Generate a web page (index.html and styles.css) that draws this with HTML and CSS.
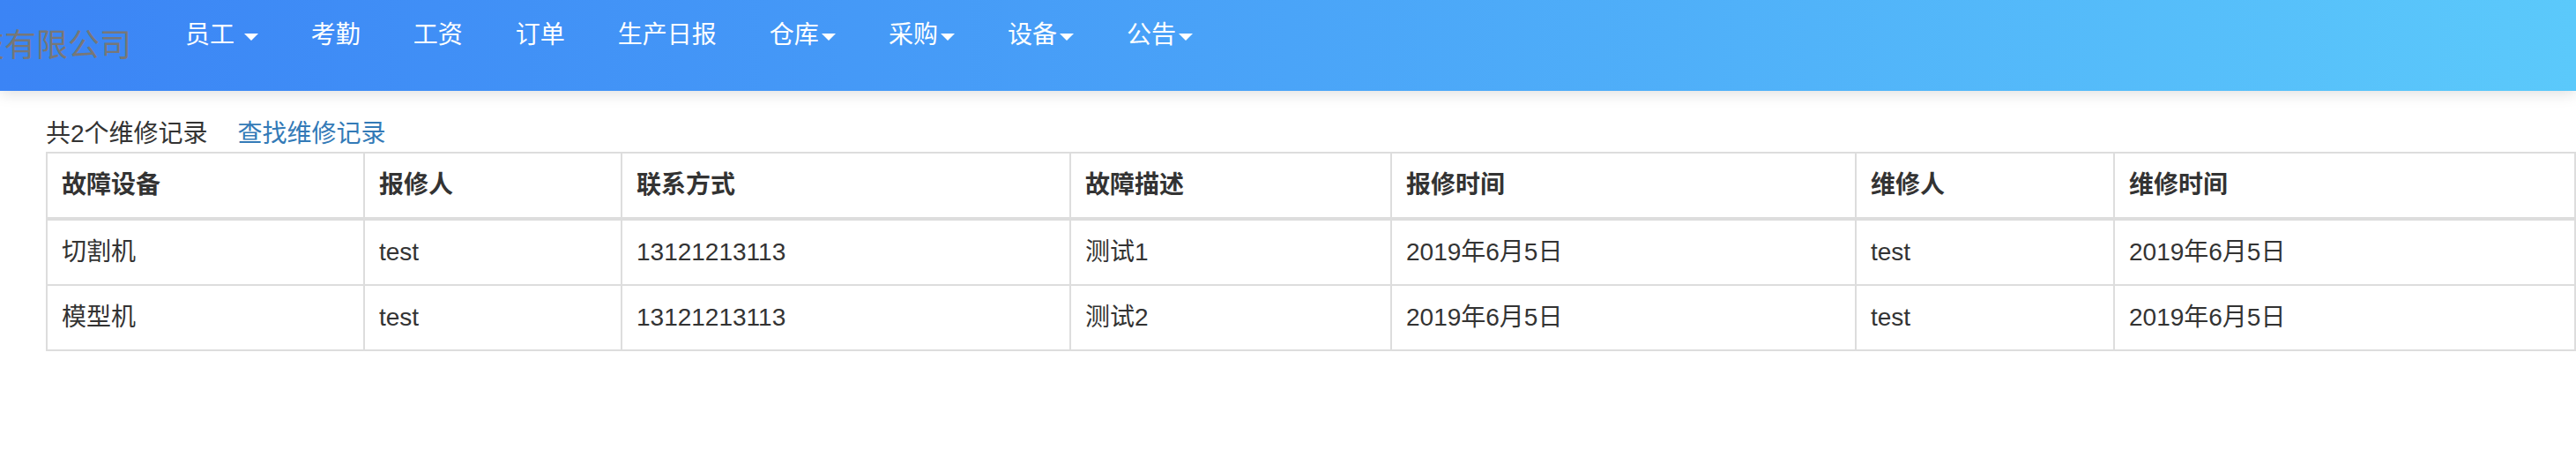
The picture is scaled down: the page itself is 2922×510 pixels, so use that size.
FILE: index.html
```html
<!DOCTYPE html>
<html lang="zh-CN">
<head>
<meta charset="utf-8">
<title>维修记录</title>
<link rel="stylesheet" href="styles.css">
</head>
<body>
<nav class="navbar">
  <a class="brand" href="#">某某科技有限公司</a>
  <ul class="nav">
    <li><a href="#">员工 <span class="caret"></span></a></li>
    <li><a href="#">考勤</a></li>
    <li><a href="#">工资</a></li>
    <li><a href="#">订单</a></li>
    <li><a href="#">生产日报</a></li>
    <li><a href="#">仓库<span class="caret"></span></a></li>
    <li><a href="#">采购<span class="caret"></span></a></li>
    <li><a href="#">设备<span class="caret"></span></a></li>
    <li><a href="#">公告<span class="caret"></span></a></li>
  </ul>
</nav>
<main class="content">
  <div class="summary">
    <span>共2个维修记录</span><a class="link" href="#">查找维修记录</a>
  </div>
  <table class="table">
    <colgroup>
      <col class="c1"><col class="c2"><col class="c3"><col class="c4"><col class="c5"><col class="c6"><col class="c7">
    </colgroup>
    <thead>
      <tr><th>故障设备</th><th>报修人</th><th>联系方式</th><th>故障描述</th><th>报修时间</th><th>维修人</th><th>维修时间</th></tr>
    </thead>
    <tbody>
      <tr><td>切割机</td><td>test</td><td>13121213113</td><td>测试1</td><td>2019年6月5日</td><td>test</td><td>2019年6月5日</td></tr>
      <tr><td>模型机</td><td>test</td><td>13121213113</td><td>测试2</td><td>2019年6月5日</td><td>test</td><td>2019年6月5日</td></tr>
    </tbody>
  </table>
</main>
</body>
</html>
```
FILE: styles.css
```css
* { box-sizing: border-box; }
html, body {
  margin: 0;
  padding: 0;
  overflow: hidden;
  background: #fff;
}
body {
  font-family: "Liberation Sans", "Noto Sans CJK SC", sans-serif;
  font-size: 28px;
  line-height: 40px;
  color: #333;
}
a { text-decoration: none; }

.navbar {
  position: relative;
  z-index: 2;
  height: 103px;
  display: flex;
  align-items: flex-start;
  background: linear-gradient(to right, #3b84f5 0%, #4aa4f8 50%, #5bc9fb 100%);
  box-shadow: 0 3px 16px rgba(0, 0, 0, 0.13);
}
.brand {
  flex: none;
  margin-left: -139px;
  padding-right: 31px;
  font-size: 36px;
  line-height: 103px;
  color: #777;
  white-space: nowrap;
}
.nav {
  display: flex;
  margin: 0;
  padding: 0;
  list-style: none;
}
.nav a {
  display: block;
  padding: 20px 30px 0;
  line-height: 40px;
  color: #fff;
  white-space: nowrap;
}
.caret {
  display: inline-block;
  width: 0;
  height: 0;
  margin-left: 3px;
  vertical-align: middle;
  border-top: 8px solid #fff;
  border-left: 8px solid transparent;
  border-right: 8px solid transparent;
}

.content {
  padding: 29px 2px 0 52px;
}
.summary {
  line-height: 40px;
  height: 40px;
}
.link {
  margin-left: 34px;
  color: #337ab7;
}

.table {
  width: 100%;
  table-layout: fixed;
  border-collapse: collapse;
  border: 2px solid #ddd;
}
.table th,
.table td {
  padding: 16px;
  line-height: 40px;
  text-align: left;
  border: 2px solid #ddd;
  white-space: nowrap;
  overflow: hidden;
}
.table th {
  font-weight: 700;
  border-bottom-width: 4px;
}
.c1 { width: 360px; }
.c2 { width: 292px; }
.c3 { width: 509px; }
.c4 { width: 364px; }
.c5 { width: 527px; }
.c6 { width: 293px; }
.c7 { width: 523px; }
```
